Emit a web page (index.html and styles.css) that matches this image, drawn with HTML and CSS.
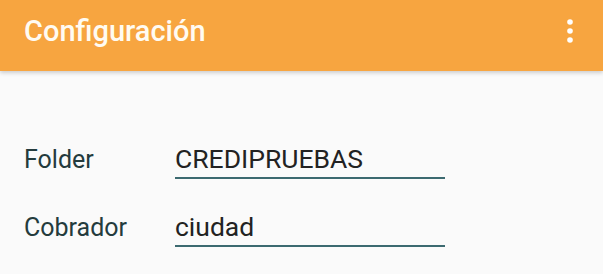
FILE: index.html
```html
<!DOCTYPE html>
<html lang="es">
<head>
<meta charset="utf-8">
<link rel="stylesheet" href="styles.css">
</head>
<body>
<header class="toolbar">
  <h1 class="title">Configuración</h1>
  <button class="menu" aria-label="Más opciones">
    <svg width="10" height="24" viewBox="0 0 10 24"><circle cx="5" cy="3" r="2.8" fill="#fff"/><circle cx="5" cy="12" r="2.8" fill="#fff"/><circle cx="5" cy="21" r="2.8" fill="#fff"/></svg>
  </button>
</header>
<main class="content">
  <div class="row">
    <span class="label">Folder</span>
    <div class="field">CREDIPRUEBAS</div>
  </div>
  <div class="row">
    <span class="label">Cobrador</span>
    <div class="field">ciudad</div>
  </div>
</main>
</body>
</html>
```
FILE: styles.css
```css
html, body { margin: 0; padding: 0; }
body {
  background: #fafafa;
  font-family: Roboto, "Noto Sans", sans-serif;
  width: 603px;
  height: 274px;
  overflow: hidden;
}
.toolbar {
  height: 71px;
  box-sizing: border-box;
  background: #f7a540;
  display: flex;
  align-items: center;
  justify-content: space-between;
  padding: 0 28px 10px 24px;
  box-shadow: 0 2px 4px rgba(0,0,0,0.18);
  position: relative;
}
.title {
  margin: 0;
  font-size: 29px;
  font-weight: 500;
  color: #fffbf2;
}
.menu {
  background: none;
  border: 0;
  padding: 0;
  display: flex;
}
.content {
  padding: 72px 24px 0;
  display: flex;
  flex-direction: column;
  gap: 32px;
}
.row {
  display: flex;
  align-items: baseline;
}
.label {
  width: 151px;
  font-size: 25px;
  color: #243b3d;
}
.field {
  width: 270px;
  font-size: 26.5px;
  color: #222;
  padding-bottom: 3px;
  border-bottom: 2px solid #3c6a70;
}
```
